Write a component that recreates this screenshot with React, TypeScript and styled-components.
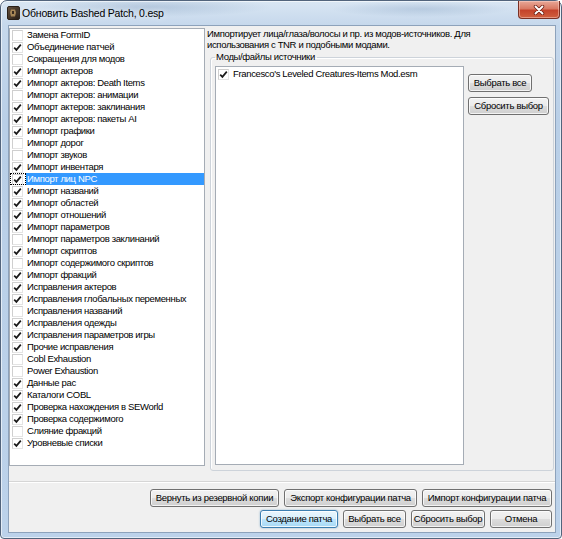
import styled, { createGlobalStyle, css } from 'styled-components'

const UI_FONT = `"Liberation Sans", Arial, sans-serif`

const GlobalStyle = createGlobalStyle`
  html, body { margin: 0; padding: 0; background: #ffffff; }
  * { box-sizing: border-box; }
`

const patchers: [string, boolean][] = [
  ['Замена FormID', false],
  ['Объединение патчей', true],
  ['Сокращения для модов', false],
  ['Импорт актеров', true],
  ['Импорт актеров: Death Items', true],
  ['Импорт актеров: анимации', false],
  ['Импорт актеров: заклинания', true],
  ['Импорт актеров: пакеты AI', true],
  ['Импорт графики', true],
  ['Импорт дорог', false],
  ['Импорт звуков', false],
  ['Импорт инвентаря', true],
  ['Импорт лиц NPC', true],
  ['Импорт названий', true],
  ['Импорт областей', true],
  ['Импорт отношений', true],
  ['Импорт параметров', true],
  ['Импорт параметров заклинаний', false],
  ['Импорт скриптов', true],
  ['Импорт содержимого скриптов', false],
  ['Импорт фракций', true],
  ['Исправления актеров', true],
  ['Исправления глобальных переменных', true],
  ['Исправления названий', false],
  ['Исправления одежды', true],
  ['Исправления параметров игры', true],
  ['Прочие исправления', true],
  ['Cobl Exhaustion', false],
  ['Power Exhaustion', false],
  ['Данные рас', true],
  ['Каталоги COBL', true],
  ['Проверка нахождения в SEWorld', true],
  ['Проверка содержимого', true],
  ['Слияние фракций', false],
  ['Уровневые списки', true],
]

const SELECTED = 'Импорт лиц NPC'

const Window = styled.div`
  width: 562px;
  height: 539px;
  display: flex;
  flex-direction: column;
  padding: 0 5px 5px 7px;
  border: 1px solid #52647c;
  border-radius: 7px 7px 4px 4px;
  background:
    radial-gradient(ellipse 120px 10px at 150px 6px, rgba(120, 150, 185, 0.35), transparent),
    radial-gradient(ellipse 90px 8px at 420px 8px, rgba(120, 150, 185, 0.3), transparent),
    linear-gradient(180deg, #d9e6f3 0px, #c6d8ec 24px, #b9cfe7 120px, #bcd2ea 100%);
  box-shadow: inset 0 0 0 1px rgba(255, 255, 255, 0.6);
  font-family: ${UI_FONT};
  font-size: 9.5px;
  letter-spacing: -0.35px;
  color: #000;
`

const TitleBar = styled.div`
  height: 24px;
  margin: 0 -5px 0 -7px;
  padding: 0 1px 0 6px;
  display: flex;
  align-items: center;
`

const TitleText = styled.span`
  margin-left: 2px;
  font-size: 10.5px;
  letter-spacing: -0.2px;
  color: #000;
  text-shadow: 0 0 6px rgba(255, 255, 255, 0.9);
`

const CloseButton = styled.div`
  margin-left: auto;
  align-self: flex-start;
  width: 42px;
  height: 18px;
  display: flex;
  align-items: center;
  justify-content: center;
  border: 1px solid #7a3024;
  border-top: none;
  border-radius: 0 0 4px 4px;
  background: linear-gradient(180deg, #e8a898 0%, #d97a64 45%, #c4432b 55%, #d0603f 100%);
  box-shadow: inset 0 0 0 1px rgba(255, 220, 210, 0.45);
`

const Client = styled.div`
  flex: 1;
  display: flex;
  flex-direction: column;
  background: #f0f0f0;
  border: 1px solid #8da2bb;
`

const MainArea = styled.div`
  height: 456px;
  flex-shrink: 0;
  display: flex;
  padding-top: 2px;
  border-bottom: 1px solid #d6d6d6;
  box-shadow: 0 1px 0 #ffffff;
`

const ListBox = styled.div<{ $w: number; $h?: number }>`
  width: ${({ $w }) => $w}px;
  ${({ $h }) => ($h ? css`height: ${$h}px;` : '')}
  flex-shrink: 0;
  background: #ffffff;
  border: 1px solid #a5acb5;
  overflow: hidden;
`

const Row = styled.div`
  display: flex;
  height: 12px;
  line-height: 12px;
  white-space: nowrap;
`

const CheckCell = styled.div<{ $focused?: boolean }>`
  width: 16px;
  height: 12px;
  flex-shrink: 0;
  display: flex;
  align-items: center;
  padding-left: 1px;
  ${({ $focused }) =>
    $focused &&
    css`
      outline: 1px dotted #000;
      outline-offset: -1px;
    `}
`

const Box = styled.span`
  width: 11px;
  height: 11px;
  margin-left: 1px;
  display: flex;
  align-items: center;
  justify-content: center;
  border: 1px solid #cfcfcf;
  border-right-color: #e4e4e4;
  border-bottom-color: #e4e4e4;
  background: #fff;
`

const Label = styled.span<{ $selected?: boolean }>`
  flex: 1;
  padding-left: 1px;
  background: ${({ $selected }) => ($selected ? '#3399ff' : 'transparent')};
  color: ${({ $selected }) => ($selected ? '#ffffff' : '#000000')};
`

const RightPane = styled.div`
  flex: 1;
  min-width: 0;
  display: flex;
  flex-direction: column;
  padding: 0 1px 0 2px;
`

const Description = styled.p`
  margin: 0;
  line-height: 11px;
  white-space: nowrap;
`

const GroupBox = styled.fieldset`
  flex: 1;
  min-width: 0;
  display: flex;
  align-items: stretch;
  margin: 1px 0 10px 3px;
  padding: 3px 4px 5px 4px;
  border: 1px solid #cdd3da;
  border-radius: 3px;
  box-shadow: inset 1px 1px 0 #ffffff;
`

const GroupLabel = styled.legend`
  padding: 0 2px 0 1px;
  line-height: 12px;
`

const ButtonColumn = styled.div`
  display: flex;
  flex-direction: column;
  align-items: flex-start;
  gap: 5px;
  padding-top: 8px;
  margin-left: 4px;
`

const Button = styled.button<{ $w: number; $default?: boolean }>`
  width: ${({ $w }) => $w}px;
  height: 18px;
  padding: 0;
  font-family: ${UI_FONT};
  font-size: 9.5px;
  letter-spacing: -0.3px;
  line-height: 16px;
  color: #000;
  white-space: nowrap;
  border: 1px solid #707070;
  border-radius: 3px;
  background: linear-gradient(180deg, #f2f2f2 0%, #ebebeb 50%, #dddddd 50%, #cfcfcf 100%);
  box-shadow: inset 0 0 0 1px rgba(255, 255, 255, 0.75);
  ${({ $default }) =>
    $default &&
    css`
      border-color: #3c7fb1;
      background: linear-gradient(180deg, #eaf6fd 0%, #d9f0fc 50%, #bee6fd 50%, #a7d9f5 100%);
      box-shadow: inset 0 0 0 1px rgba(255, 255, 255, 0.8), 0 0 2px rgba(60, 127, 177, 0.6);
    `}
`

const Footer = styled.div`
  display: flex;
  flex-direction: column;
  align-items: flex-end;
  gap: 3px;
  padding: 7px 3px 0 0;
`

const ButtonRow = styled.div`
  display: flex;
  gap: 5px;
`

const ModsInner = styled.div`
  padding: 1px 0 0 0;
`

function CheckMark() {
  return (
    <svg width="9" height="9" viewBox="0 0 9 9">
      <path d="M1.2 4.6 L3.4 6.9 L7.8 1.6" fill="none" stroke="#1a1a1a" strokeWidth="1.7" />
    </svg>
  )
}

function AppIcon() {
  return (
    <svg width="13" height="14" viewBox="0 0 13 14">
      <defs>
        <linearGradient id="ico" x1="0" y1="0" x2="1" y2="1">
          <stop offset="0" stopColor="#6a5440" />
          <stop offset="1" stopColor="#241b14" />
        </linearGradient>
      </defs>
      <rect x="0.5" y="0.5" width="12" height="13" rx="1.5" fill="url(#ico)" stroke="#2a2018" />
      <path d="M4 3.5 h4 l1 3 -1 4 h-4 l-1-4 z" fill="#b8955f" opacity="0.85" />
      <rect x="5" y="5" width="2" height="3" fill="#3a2c20" />
    </svg>
  )
}

function CloseGlyph() {
  return (
    <svg width="12" height="10" viewBox="0 0 12 10">
      <path d="M2.5 1.5 L9.5 8.5 M9.5 1.5 L2.5 8.5" stroke="#6b1d12" strokeWidth="3.4" strokeLinecap="round" />
      <path d="M2.5 1.5 L9.5 8.5 M9.5 1.5 L2.5 8.5" stroke="#ffffff" strokeWidth="1.9" strokeLinecap="round" />
    </svg>
  )
}

function CheckRow({ label, checked, selected }: { label: string; checked: boolean; selected?: boolean }) {
  return (
    <Row>
      <CheckCell $focused={selected}>
        <Box>{checked && <CheckMark />}</Box>
      </CheckCell>
      <Label $selected={selected}>{label}</Label>
    </Row>
  )
}

export default function App() {
  return (
    <>
      <GlobalStyle />
      <Window>
        <TitleBar>
          <AppIcon />
          <TitleText>Обновить Bashed Patch, 0.esp</TitleText>
          <CloseButton>
            <CloseGlyph />
          </CloseButton>
        </TitleBar>

        <Client>
          <MainArea>
            <ListBox $w={196} $h={438}>
              {patchers.map(([label, checked]) => (
                <CheckRow key={label} label={label} checked={checked} selected={label === SELECTED} />
              ))}
            </ListBox>

            <RightPane>
              <Description>
                Импортирует лица/глаза/волосы и пр. из модов-источников. Для
                <br />
                использования с TNR и подобными модами.
              </Description>

              <GroupBox>
                <GroupLabel>Моды/файлы источники</GroupLabel>
                <ListBox $w={249}>
                  <ModsInner>
                    <CheckRow label="Francesco's Leveled Creatures-Items Mod.esm" checked />
                  </ModsInner>
                </ListBox>
                <ButtonColumn>
                  <Button $w={64}>Выбрать все</Button>
                  <Button $w={81}>Сбросить выбор</Button>
                </ButtonColumn>
              </GroupBox>
            </RightPane>
          </MainArea>

          <Footer>
            <ButtonRow>
              <Button $w={129}>Вернуть из резервной копии</Button>
              <Button $w={133}>Экспорт конфигурации патча</Button>
              <Button $w={130}>Импорт конфигурации патча</Button>
            </ButtonRow>
            <ButtonRow>
              <Button $w={78} $default>
                Создание патча
              </Button>
              <Button $w={63}>Выбрать все</Button>
              <Button $w={74}>Сбросить выбор</Button>
              <Button $w={62}>Отмена</Button>
            </ButtonRow>
          </Footer>
        </Client>
      </Window>
    </>
  )
}
